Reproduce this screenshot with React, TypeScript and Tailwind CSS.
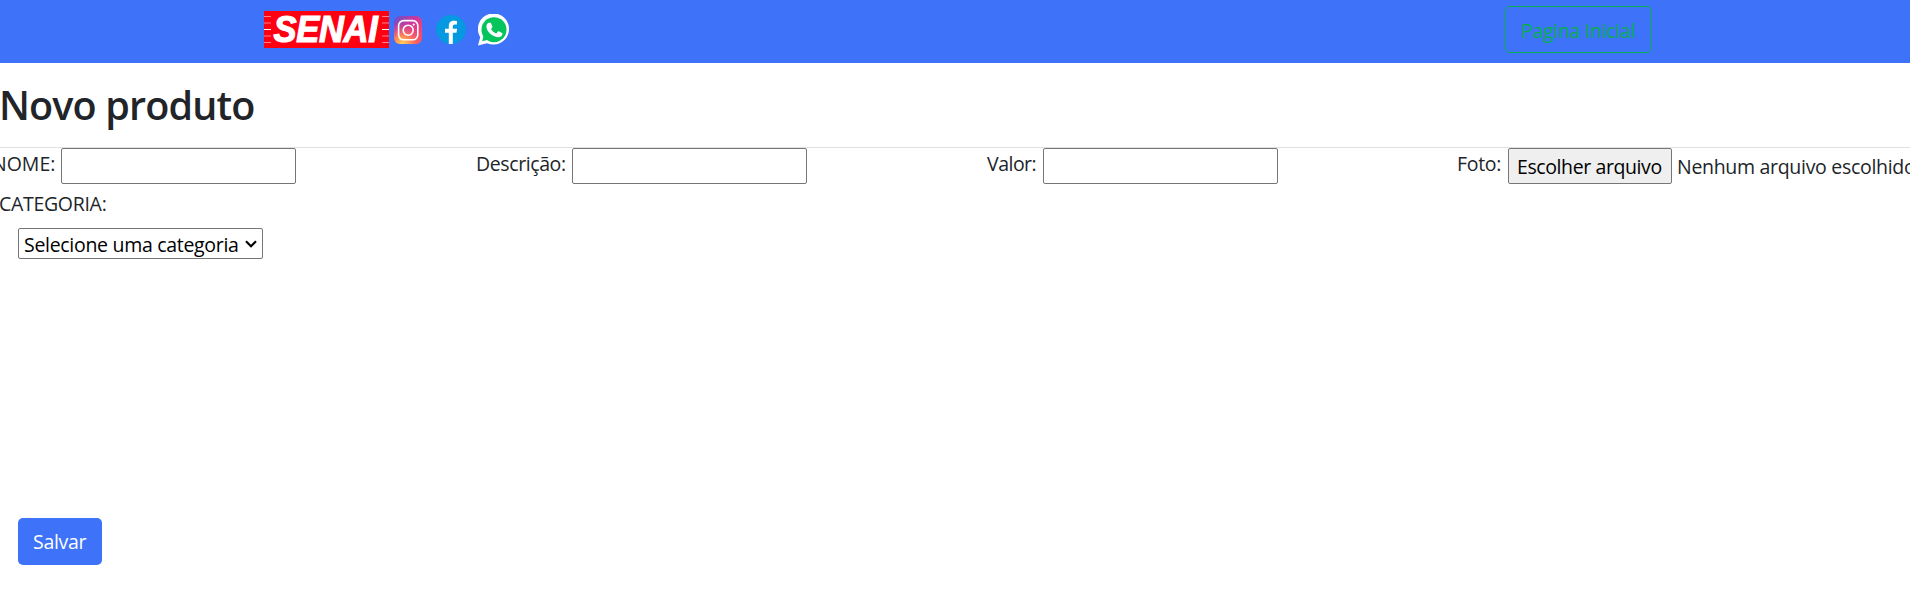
import React from "react";

function SenaiLogo() {
  return (
    <svg width="125" height="37" viewBox="0 0 125 37" className="block shrink-0" aria-label="SENAI">
      <rect width="125" height="37" fill="#ff0012" />
      {[5.5, 12, 18.5, 25, 31.5].map((y) => (
        <g key={y} stroke="#ffffff" strokeWidth="1" opacity={y === 18.5 ? 1 : 0.5}>
          <path d={`M0 ${y}H7`} />
          <path d={`M118 ${y}H125`} />
        </g>
      ))}
      <text
        x="9.5"
        y="31"
        textLength="104"
        lengthAdjust="spacingAndGlyphs"
        fill="#ffffff"
        stroke="#ffffff"
        strokeWidth="1.2"
        fontFamily="Liberation Sans, sans-serif"
        fontWeight="700"
        fontStyle="italic"
        fontSize="36"
      >
        SENAI
      </text>
    </svg>
  );
}

function InstagramIcon() {
  return (
    <svg width="28" height="28" viewBox="0 0 28 28" className="mt-[4.500px] ml-[5px] block shrink-0">
      <defs>
        <linearGradient id="ig-base" x1="0" y1="0" x2="1" y2="1">
          <stop offset="0" stopColor="#5f55cf" />
          <stop offset="0.4" stopColor="#c737a0" />
          <stop offset="0.7" stopColor="#f2407c" />
          <stop offset="1" stopColor="#fb5a50" />
        </linearGradient>
        <radialGradient id="ig-glow" cx="0.3" cy="1.02" r="0.8">
          <stop offset="0" stopColor="#ffd85c" />
          <stop offset="0.35" stopColor="#ff9350" />
          <stop offset="1" stopColor="#f2407c" stopOpacity="0" />
        </radialGradient>
      </defs>
      <rect width="28" height="28" rx="6" fill="url(#ig-base)" />
      <rect width="28" height="28" rx="6" fill="url(#ig-glow)" />
      <rect x="4.6" y="4.6" width="19.2" height="19.2" rx="5" fill="none" stroke="#fff" strokeWidth="1.6" />
      <circle cx="14.2" cy="14.2" r="5" fill="none" stroke="#fff" strokeWidth="1.6" />
      <circle cx="19.7" cy="8.6" r="1.1" fill="#fff" />
    </svg>
  );
}

function FacebookIcon() {
  return (
    <svg width="30" height="30" viewBox="0 0 30 30" className="mt-1 ml-3.5 block shrink-0">
      <ellipse cx="15" cy="14.6" rx="15" ry="14.6" fill="#0798e2" />
      <path
        d="M12.8 29V17.8H9V13.8h3.800V11c0-3.600 2-5.300 5-5.300 1.700 0 3.200.3 3.200.3v3.400h-2c-1.600 0-2.200.9-2.200 2v2.400h4.300l-.6 4h-3.700V29z"
        fill="#fff"
      />
    </svg>
  );
}

function WhatsappIcon() {
  return (
    <svg width="32" height="32" viewBox="0 0 32 32" className="mt-[3px] ml-3 block shrink-0">
      <path d="M0 31.4 2.2 23.2A15.6 15.6 0 1 1 9 29.2z" fill="#fff" />
      <circle cx="16" cy="15.7" r="12.5" fill="#05c45c" />
      <path d="M4.2 27.2 5.6 21.5 10 25.8z" fill="#05c45c" />
      <path
        d="M11.1 8.7h1.1c.4 0 .7.1.9.7l1.3 3.1c.1.3 0 .6-.2.9l-1.2 1.5c1.3 2.2 3 3.600 5.300 4.600l1.600-1.900c.3-.4.6-.4.9-.3l3.200 1.600c.4.2.5.4.5.7 0 2.500-2.100 3.700-4 3.700-5.200 0-12.100-5.500-12.100-10.800 0-1.700 1.200-3.800 2.700-3.800z"
        fill="#fff"
      />
    </svg>
  );
}

const inputClass = "block h-9 w-[235px] shrink-0 rounded-[2px] border border-[#767676] bg-white px-1 outline-none";

export default function App() {
  return (
    <div className="h-[607px] w-full overflow-hidden bg-white font-['Open_Sans','Noto_Sans',sans-serif] text-[19.5px] tracking-[-0.3px] text-[#212529]">
      <header className="flex h-[63px] items-start bg-[#3d72f9] pl-[264px]">
        <div className="flex w-[1241px] items-start pt-[11px]">
          <SenaiLogo />
          <InstagramIcon />
          <FacebookIcon />
          <WhatsappIcon />
        </div>
        <a href="#" className="mt-1.5 flex h-[47px] w-[147px] shrink-0 items-center rounded-[5px] border border-[#08ad51] pt-[3px] pl-[15px] text-[#08ad51]">
          <span className="whitespace-nowrap">Pagina Inicial</span>
        </a>
      </header>

      <h1 className="-ml-px h-[84px] whitespace-nowrap pt-[18px] text-[39.5px] leading-[48px] font-semibold tracking-[-0.85px]">Novo produto</h1>

      <form>
        <div className="flex h-[37px] border-t border-[#dee2e6] whitespace-nowrap">
          <div className="-ml-2 flex w-[485px] shrink-0">
            <label className="w-[69px] shrink-0 leading-[32px] tracking-normal">NOME:</label>
            <input className={inputClass} />
          </div>
          <div className="flex w-[510px] shrink-0">
            <label className="-ml-px w-[96px] shrink-0 leading-[32px] tracking-[-0.4px]">Descrição:</label>
            <input className={inputClass} />
          </div>
          <div className="flex w-[471px] shrink-0">
            <label className="w-[56px] shrink-0 leading-[32px] tracking-[-0.5px]">Valor:</label>
            <input className={inputClass} />
          </div>
          <div className="flex shrink-0">
            <label className="-ml-px w-[51px] shrink-0 leading-[32px]">Foto:</label>
            <button type="button" className="h-9 w-[164px] rounded-[2px] border border-[#767676] bg-[#efefef] pl-2 text-left leading-[36px] tracking-[-0.4px] text-black">
              Escolher arquivo
            </button>
            <span className="ml-[5px] leading-[38px]">Nenhum arquivo escolhido</span>
          </div>
        </div>

        <label className="-ml-px block h-11 leading-[40px]">CATEGORIA:</label>
        <button type="button" className="ml-[18px] flex h-[31px] w-[245px] items-center justify-between rounded-[2px] border border-[#767676] bg-white pr-[5px] pl-[5px] text-black">
          <span className="pt-[3px] whitespace-nowrap">Selecione uma categoria</span>
          <svg width="12" height="8" viewBox="0 0 12 8" className="shrink-0">
            <path d="M1 1.200 6 6.200 11 1.200" fill="none" stroke="currentColor" strokeWidth="2.200" />
          </svg>
        </button>

        <button type="submit" className="mt-[259px] ml-[18px] flex h-[47px] w-[84px] items-center rounded-[5px] bg-[#3d72f9] pt-px pl-[15px] text-white">
          <span>Salvar</span>
        </button>
      </form>
    </div>
  );
}
